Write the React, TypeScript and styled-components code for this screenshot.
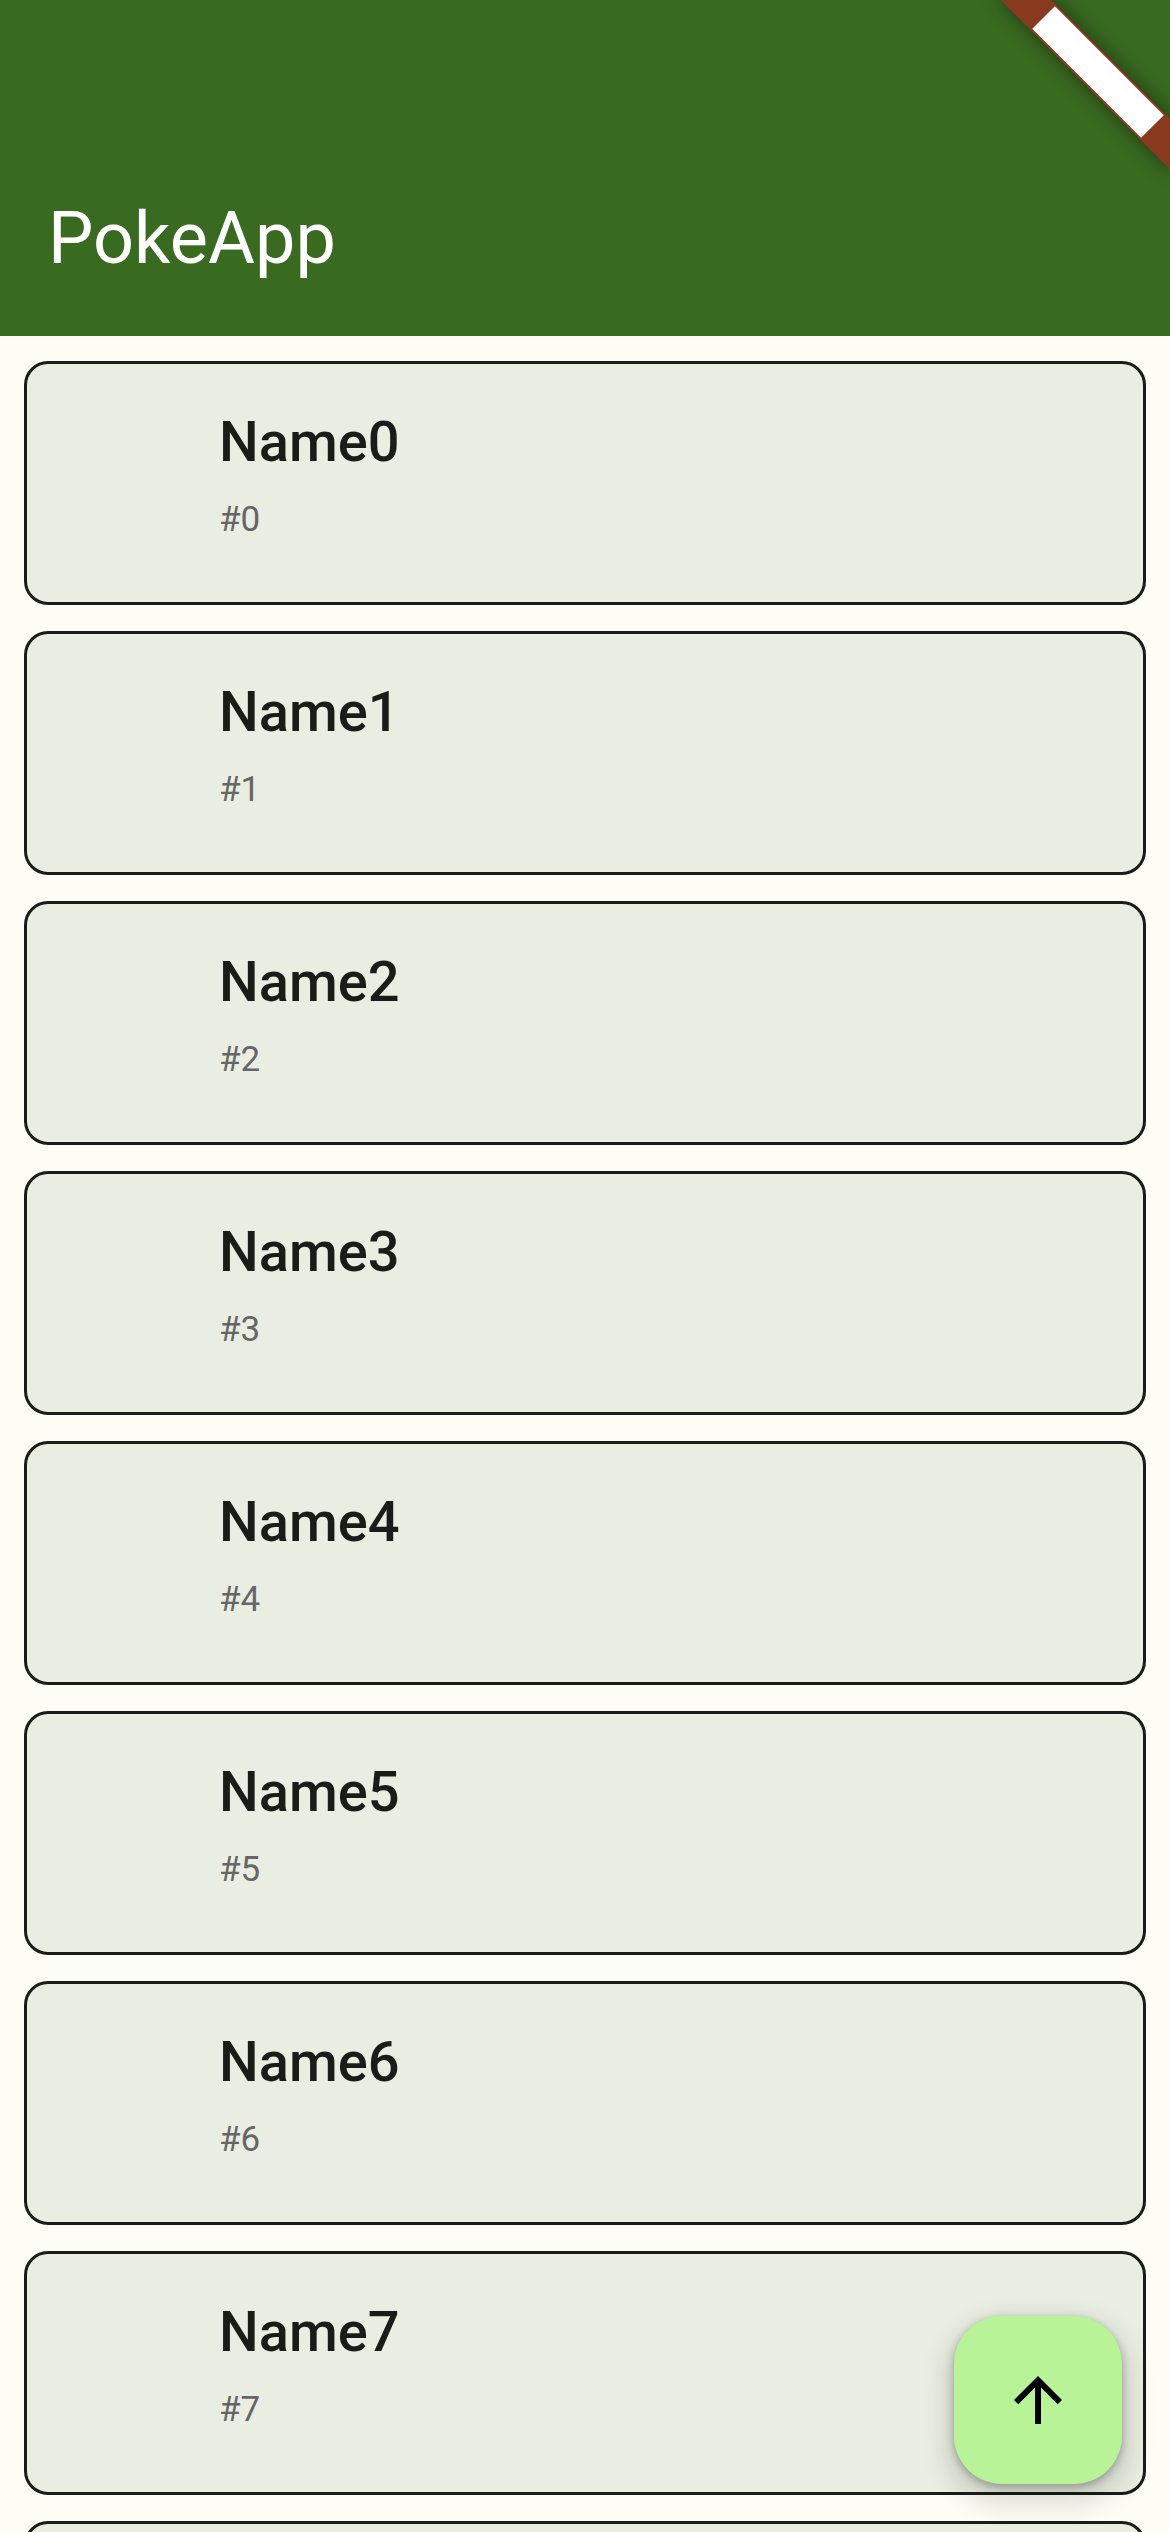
import React from 'react';
import styled, { createGlobalStyle } from 'styled-components';

const GlobalStyle = createGlobalStyle`
  html, body {
    margin: 0;
    padding: 0;
    width: 1170px;
    height: 2532px;
    overflow: hidden;
    background: #fdfdf5;
  }
  body {
    font-family: Roboto, "Noto Sans", sans-serif;
  }
  #root {
    width: 1170px;
    height: 2532px;
  }
`;

const Screen = styled.div`
  position: relative;
  width: 1170px;
  height: 2532px;
  overflow: hidden;
  background: #fdfdf5;
  display: flex;
  flex-direction: column;
`;

const AppBar = styled.header`
  flex-shrink: 0;
  height: 336px;
  box-sizing: border-box;
  background: #386a20;
  display: flex;
  align-items: flex-end;
  padding: 0 48px 61px;
`;

const Title = styled.h1`
  margin: 0;
  font-family: Roboto, "Noto Sans", sans-serif;
  font-weight: 400;
  font-size: 72px;
  line-height: 72px;
  color: #ffffff;
`;

const List = styled.main`
  display: flex;
  flex-direction: column;
  gap: 26px;
  padding: 25px 24px 0;
`;

const Card = styled.article`
  flex-shrink: 0;
  height: 244px;
  box-sizing: border-box;
  border: 3px solid #1a1c18;
  border-radius: 24px;
  background: #eaeee2;
  display: flex;
  flex-direction: column;
  padding: 50px 0 0 192px;
`;

const Name = styled.div`
  font-family: Roboto, "Noto Sans", sans-serif;
  font-weight: 500;
  font-size: 56px;
  line-height: 56px;
  color: #1a1c18;
`;

const Number = styled.div`
  margin-top: 32px;
  font-family: Roboto, "Noto Sans", sans-serif;
  font-weight: 400;
  font-size: 35px;
  line-height: 35px;
  color: #666666;
`;

const Banner = styled.div`
  position: absolute;
  top: 54px;
  left: 978px;
  width: 240px;
  height: 36px;
  transform: rotate(45deg);
  background: rgba(183, 28, 28, 0.627);
  box-shadow: 0 0 20px rgba(0, 0, 0, 0.45);
  display: flex;
  align-items: center;
  justify-content: center;
`;

const BannerLabel = styled.div`
  width: 154px;
  height: 32px;
  background: #ffffff;
`;

const Fab = styled.button`
  position: absolute;
  right: 48px;
  bottom: 48px;
  width: 168px;
  height: 168px;
  border: none;
  border-radius: 48px;
  background: #b8f397;
  box-shadow: 0 12px 24px 9px rgba(0, 0, 0, 0.13), 0 3px 9px rgba(0, 0, 0, 0.28);
  display: flex;
  align-items: center;
  justify-content: center;
  padding: 0;
  cursor: pointer;
`;

const ArrowUp = () => (
  <svg width="72" height="72" viewBox="0 0 24 24" aria-hidden="true">
    <path
      d="M4 12l1.41 1.41L11 7.83V20h2V7.83l5.58 5.59L20 12l-8-8-8 8z"
      fill="#000000"
    />
  </svg>
);

const items = Array.from({ length: 9 }, (_, i) => i);

export default function App() {
  return (
    <>
      <GlobalStyle />
      <Screen>
        <AppBar>
          <Title>PokeApp</Title>
        </AppBar>
        <List>
          {items.map((i) => (
            <Card key={i}>
              <Name>{`Name${i}`}</Name>
              <Number>{`#${i}`}</Number>
            </Card>
          ))}
        </List>
        <Banner>
          <BannerLabel />
        </Banner>
        <Fab aria-label="Scroll to top">
          <ArrowUp />
        </Fab>
      </Screen>
    </>
  );
}
